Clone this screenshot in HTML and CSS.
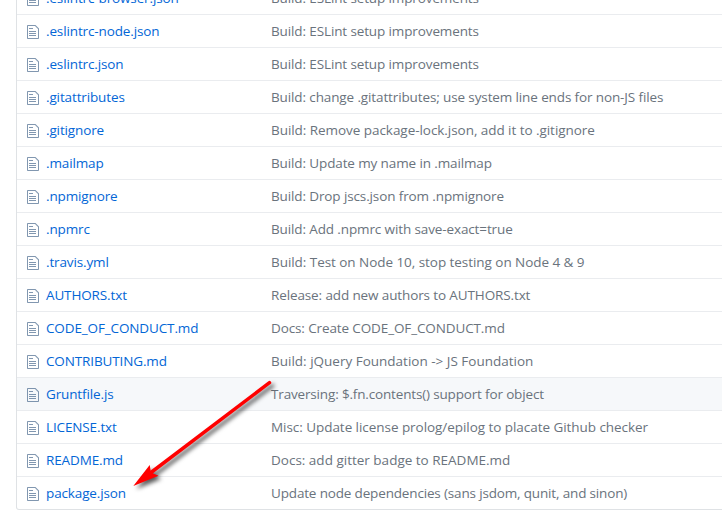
FILE: index.html
```
<!DOCTYPE html>
<html lang="en">
<head>
<meta charset="utf-8">
<title>Files</title>
<link rel="stylesheet" href="styles.css">
</head>
<body>
<svg class="defs" aria-hidden="true"><symbol id="file" viewBox="0 0 12 16"><path d="M6 5H2V4h4v1zM2 8h7V7H2v1zm0 2h7V9H2v1zm0 2h7v-1H2v1zm10-7.500V14c0 .55-.45 1-1 1H1c-.55 0-1-.45-1-1V2c0-.55.45-1 1-1h7.500L12 4.500zM11 5L8 2H1v12h10V5z"/></symbol></svg>
<main class="files">
<div class="row"><svg class="icon"><use href="#file"/></svg><a class="name">.eslintrc-browser.json</a><span class="message">Build: ESLint setup improvements</span></div>
<div class="row"><svg class="icon"><use href="#file"/></svg><a class="name">.eslintrc-node.json</a><span class="message">Build: ESLint setup improvements</span></div>
<div class="row"><svg class="icon"><use href="#file"/></svg><a class="name">.eslintrc.json</a><span class="message">Build: ESLint setup improvements</span></div>
<div class="row"><svg class="icon"><use href="#file"/></svg><a class="name">.gitattributes</a><span class="message">Build: change .gitattributes; use system line ends for non-JS files</span></div>
<div class="row"><svg class="icon"><use href="#file"/></svg><a class="name">.gitignore</a><span class="message loose">Build: Remove package-lock.json, add it to .gitignore</span></div>
<div class="row"><svg class="icon"><use href="#file"/></svg><a class="name">.mailmap</a><span class="message">Build: Update my name in .mailmap</span></div>
<div class="row"><svg class="icon"><use href="#file"/></svg><a class="name">.npmignore</a><span class="message">Build: Drop jscs.json from .npmignore</span></div>
<div class="row"><svg class="icon"><use href="#file"/></svg><a class="name">.npmrc</a><span class="message">Build: Add .npmrc with save-exact=true</span></div>
<div class="row"><svg class="icon"><use href="#file"/></svg><a class="name">.travis.yml</a><span class="message loose">Build: Test on Node 10, stop testing on Node 4 &amp; 9</span></div>
<div class="row"><svg class="icon"><use href="#file"/></svg><a class="name">AUTHORS.txt</a><span class="message">Release: add new authors to AUTHORS.txt</span></div>
<div class="row"><svg class="icon"><use href="#file"/></svg><a class="name">CODE_OF_CONDUCT.md</a><span class="message">Docs: Create CODE_OF_CONDUCT.md</span></div>
<div class="row"><svg class="icon"><use href="#file"/></svg><a class="name">CONTRIBUTING.md</a><span class="message natural">Build: jQuery Foundation -&gt; JS Foundation</span></div>
<div class="row active"><svg class="icon"><use href="#file"/></svg><a class="name">Gruntfile.js</a><span class="message tight">Traversing: $.fn.contents() support for object</span></div>
<div class="row"><svg class="icon"><use href="#file"/></svg><a class="name">LICENSE.txt</a><span class="message loose">Misc: Update license prolog/epilog to placate Github checker</span></div>
<div class="row"><svg class="icon"><use href="#file"/></svg><a class="name">README.md</a><span class="message natural">Docs: add gitter badge to README.md</span></div>
<div class="row"><svg class="icon"><use href="#file"/></svg><a class="name">package.json</a><span class="message tight">Update node dependencies (sans jsdom, qunit, and sinon)</span></div>
</main>
<svg class="arrow" viewBox="120 370 170 135" aria-hidden="true"><path class="shaft" d="M269.500 382.700L151 472.500"/><path class="head" d="M133.300 486L149.700 465L151 472.500L158.500 475.700Z"/></svg>
</body>
</html>
```
FILE: styles.css
```
body {
  margin: 0;
  height: 517px;
  overflow: hidden;
  background: #fff;
  font: 13.5px/20px "Open Sans", "Noto Sans", sans-serif;
}
.defs { display: none; }
.files {
  width: 740px;
  margin: -19px 0 0 16px;
  border: solid #dfe2e5;
  border-width: 0 1px 1px;
  border-radius: 3px;
}
.row {
  display: grid;
  grid-template-columns: 12px 225px 1fr;
  column-gap: 7px;
  align-items: start;
  box-sizing: border-box;
  height: 33px;
  padding: 6px 0 0 10px;
  border-top: 1px solid #eaecef;
  white-space: nowrap;
}
.active { background: #f6f8fa; }
.icon { width: 12px; height: 16px; margin-top: 3px; fill: rgba(3, 47, 98, 0.5); }
.name { color: #0366d6; letter-spacing: -0.13px; }
.message { color: #6a737d; margin-left: -7px; letter-spacing: -0.12px; }
.loose { letter-spacing: -0.05px; }
.natural { letter-spacing: 0; }
.tight { letter-spacing: -0.16px; }
.arrow {
  position: absolute;
  left: 120px;
  top: 370px;
  width: 170px;
  height: 135px;
  filter: drop-shadow(3px 3px 2px rgba(0, 0, 0, 0.65));
}
.shaft { stroke: #f00; stroke-width: 3.5; stroke-linecap: round; }
.head { fill: #f00; }
```
